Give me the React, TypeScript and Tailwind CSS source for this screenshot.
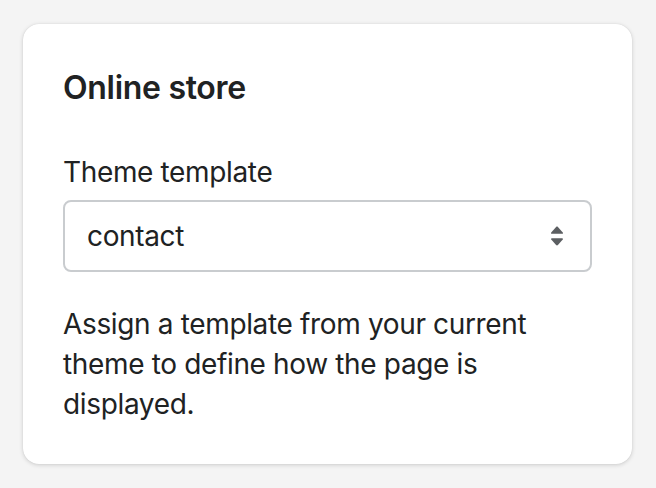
import React from 'react';

const SelectIcon = () => (
  <svg width="14" height="20" viewBox="0 0 14 20" className="text-[#5c5f62]" fill="currentColor">
    <path d="M6.1 0.9 L1.2 6.4 C0.7 7 1.1 7.8 1.9 7.8 H12.1 C12.9 7.8 13.3 7 12.8 6.4 L7.9 0.9 C7.4 0.4 6.6 0.4 6.1 0.9 Z" />
    <path d="M6.1 19.1 L1.2 13.6 C0.7 13 1.1 12.2 1.9 12.2 H12.1 C12.9 12.2 13.3 13 12.8 13.6 L7.9 19.1 C7.4 19.6 6.6 19.6 6.1 19.1 Z" />
  </svg>
);

const App = () => {
  return (
    <div
      className="min-h-[488px] w-[656px] bg-[#f4f4f4] pt-6 pl-[23px] text-[#202223]"
      style={{ fontFamily: 'Inter, "Noto Sans", sans-serif' }}
    >
      <div className="w-[609px] rounded-2xl bg-white px-10 py-10 shadow-[0_1px_4px_rgba(0,0,0,0.16),0_0_1px_rgba(0,0,0,0.12)]">
        <h2 className="text-[32px] leading-[48px] font-semibold tracking-[-0.3px]">Online store</h2>

        <div className="mt-10">
          <label className="block text-[28px] leading-10 tracking-[-0.35px]">Theme template</label>
          <div className="mt-2 flex h-[72px] items-center justify-between rounded-lg border-2 border-[#c9cccf] pl-[22px] pr-[26px]">
            <span className="text-[28px] leading-10 tracking-[-0.35px]">contact</span>
            <SelectIcon />
          </div>
        </div>

        <p className="mt-8 text-[28px] leading-10 tracking-[-0.35px]">
          Assign a template from your current theme to define how the page is displayed.
        </p>
      </div>
    </div>
  );
};

export default App;
